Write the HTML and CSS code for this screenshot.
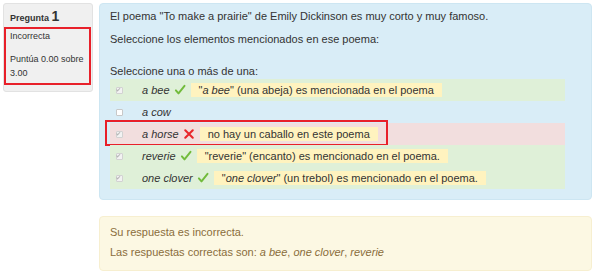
FILE: index.html
```html
<!DOCTYPE html>
<html lang="es">
<head>
<meta charset="utf-8">
<link rel="stylesheet" href="styles.css">
</head>
<body>
<div class="que">
  <div class="info">
    <h3 class="no">Pregunta <span class="qno">1</span></h3>
    <div class="mark-box">
      <div class="state">Incorrecta</div>
      <div class="grade">Puntúa 0.00 sobre 3.00</div>
    </div>
  </div>
  <div class="content">
    <div class="formulation">
      <p class="qtext">El poema "To make a prairie" de Emily Dickinson es muy corto y muy famoso.</p>
      <p class="qtext">Seleccione los elementos mencionados en ese poema:</p>
      <div class="prompt">Seleccione una o más de una:</div>
      <div class="answer">
        <div class="r correct">
          <span class="cb checked"></span>
          <span class="lbl"><i>a bee</i></span>
          <svg class="icon" viewBox="0 0 16 16"><path d="M2.5 8.5 L6 12.5 L14 2.5" fill="none" stroke="#72bb3c" stroke-width="2.6" stroke-linecap="round" stroke-linejoin="round"/></svg>
          <span class="fb">"<i>a bee</i>" (una abeja) es mencionada en el poema</span>
        </div>
        <div class="r">
          <span class="cb"></span>
          <span class="lbl"><i>a cow</i></span>
        </div>
        <div class="r incorrect">
          <span class="cb checked"></span>
          <span class="lbl"><i>a horse</i></span>
          <svg class="icon" viewBox="0 0 16 16"><path d="M3 3 L13 13 M13 3 L3 13" fill="none" stroke="#e8262c" stroke-width="2.8" stroke-linecap="round"/></svg>
          <span class="fb">no hay un caballo en este poema</span>
          <span class="annot"></span>
        </div>
        <div class="r correct">
          <span class="cb checked"></span>
          <span class="lbl"><i>reverie</i></span>
          <svg class="icon" viewBox="0 0 16 16"><path d="M2.5 8.5 L6 12.5 L14 2.5" fill="none" stroke="#72bb3c" stroke-width="2.6" stroke-linecap="round" stroke-linejoin="round"/></svg>
          <span class="fb">"reverie" (encanto) es mencionado en el poema.</span>
        </div>
        <div class="r correct">
          <span class="cb checked"></span>
          <span class="lbl"><i>one clover</i></span>
          <svg class="icon" viewBox="0 0 16 16"><path d="M2.5 8.5 L6 12.5 L14 2.5" fill="none" stroke="#72bb3c" stroke-width="2.6" stroke-linecap="round" stroke-linejoin="round"/></svg>
          <span class="fb">"<i>one clover</i>" (un trebol) es mencionado en el poema.</span>
        </div>
      </div>
    </div>
    <div class="outcome">
      <div class="line">Su respuesta es incorrecta.</div>
      <div class="line">Las respuestas correctas son: <i>a bee</i>, <i>one clover</i>, <i>reverie</i></div>
    </div>
  </div>
</div>
</body>
</html>
```
FILE: styles.css
```css
html, body {
  margin: 0;
  padding: 0;
  background: #fff;
}
body {
  font-family: "Liberation Sans", Arial, sans-serif;
  font-size: 11px;
  color: #333;
}
.que {
  display: flex;
  align-items: flex-start;
  gap: 6px;
  padding: 3px 8px 0 3px;
}
.info {
  width: 88px;
  flex: none;
  background: #f0f0f0;
  border: 1px solid #e2e2e2;
  border-radius: 3px;
  padding: 0 0 6px 0;
}
.no {
  margin: 0;
  padding: 4px 0 0 6px;
  font-size: 9px;
  font-weight: bold;
  line-height: 17px;
  color: #333;
}
.qno {
  font-size: 14px;
}
.mark-box {
  margin: 0 1px 0 0;
  border: 2px solid #e8202a;
  padding: 0 3px 3px 4px;
  font-size: 9px;
  color: #333;
}
.state {
  line-height: 14px;
  margin-bottom: 9px;
}
.grade {
  line-height: 14px;
}
.content {
  flex: 1;
  display: flex;
  flex-direction: column;
  gap: 16px;
}
.formulation {
  background: #d9edf7;
  border: 1px solid #cde6f2;
  border-radius: 4px;
  padding: 4px 26px 10px 10px;
}
.qtext {
  margin: 0 0 7px 0;
  line-height: 16px;
}
.qtext + .prompt {
  margin-top: 16px;
}
.prompt {
  line-height: 16px;
}
.answer {
  display: flex;
  flex-direction: column;
}
.r {
  position: relative;
  display: flex;
  align-items: center;
  height: 22px;
  padding-left: 6px;
}
.r.correct {
  background: #dff0d8;
}
.r.incorrect {
  background: #f2dede;
}
.cb {
  width: 5px;
  height: 5px;
  border: 1px solid #c8c8c8;
  background: #fff;
  border-radius: 1px;
  flex: none;
  margin-right: 19px;
  position: relative;
}
.cb.checked {
  background: #f2f2f2;
  border-color: #d2d2d2;
}
.cb.checked::after {
  content: "";
  position: absolute;
  left: 0px;
  top: 0px;
  width: 3px;
  height: 1px;
  border-left: 1px solid #b4b4b4;
  border-bottom: 1px solid #b4b4b4;
  transform: rotate(-45deg);
  transform-origin: 2px 2px;
}
.lbl {
  color: #333;
}
.icon {
  width: 12px;
  height: 12px;
  margin-left: 4px;
  margin-right: 5px;
  flex: none;
}
.fb {
  background: #fff3bf;
  padding: 0 8px;
  line-height: 14px;
}
.annot {
  position: absolute;
  left: -5px;
  top: -3px;
  width: 279px;
  height: 22px;
  border: 2px solid #e8202a;
  pointer-events: none;
}
.outcome {
  background: #fcf8e3;
  border: 1px solid #f7efd0;
  border-radius: 4px;
  padding: 7px 10px 10px 10px;
  color: #8a6d3b;
}
.outcome .line {
  line-height: 16px;
  margin-bottom: 4px;
}
.outcome .line:last-child {
  margin-bottom: 0;
}
```
